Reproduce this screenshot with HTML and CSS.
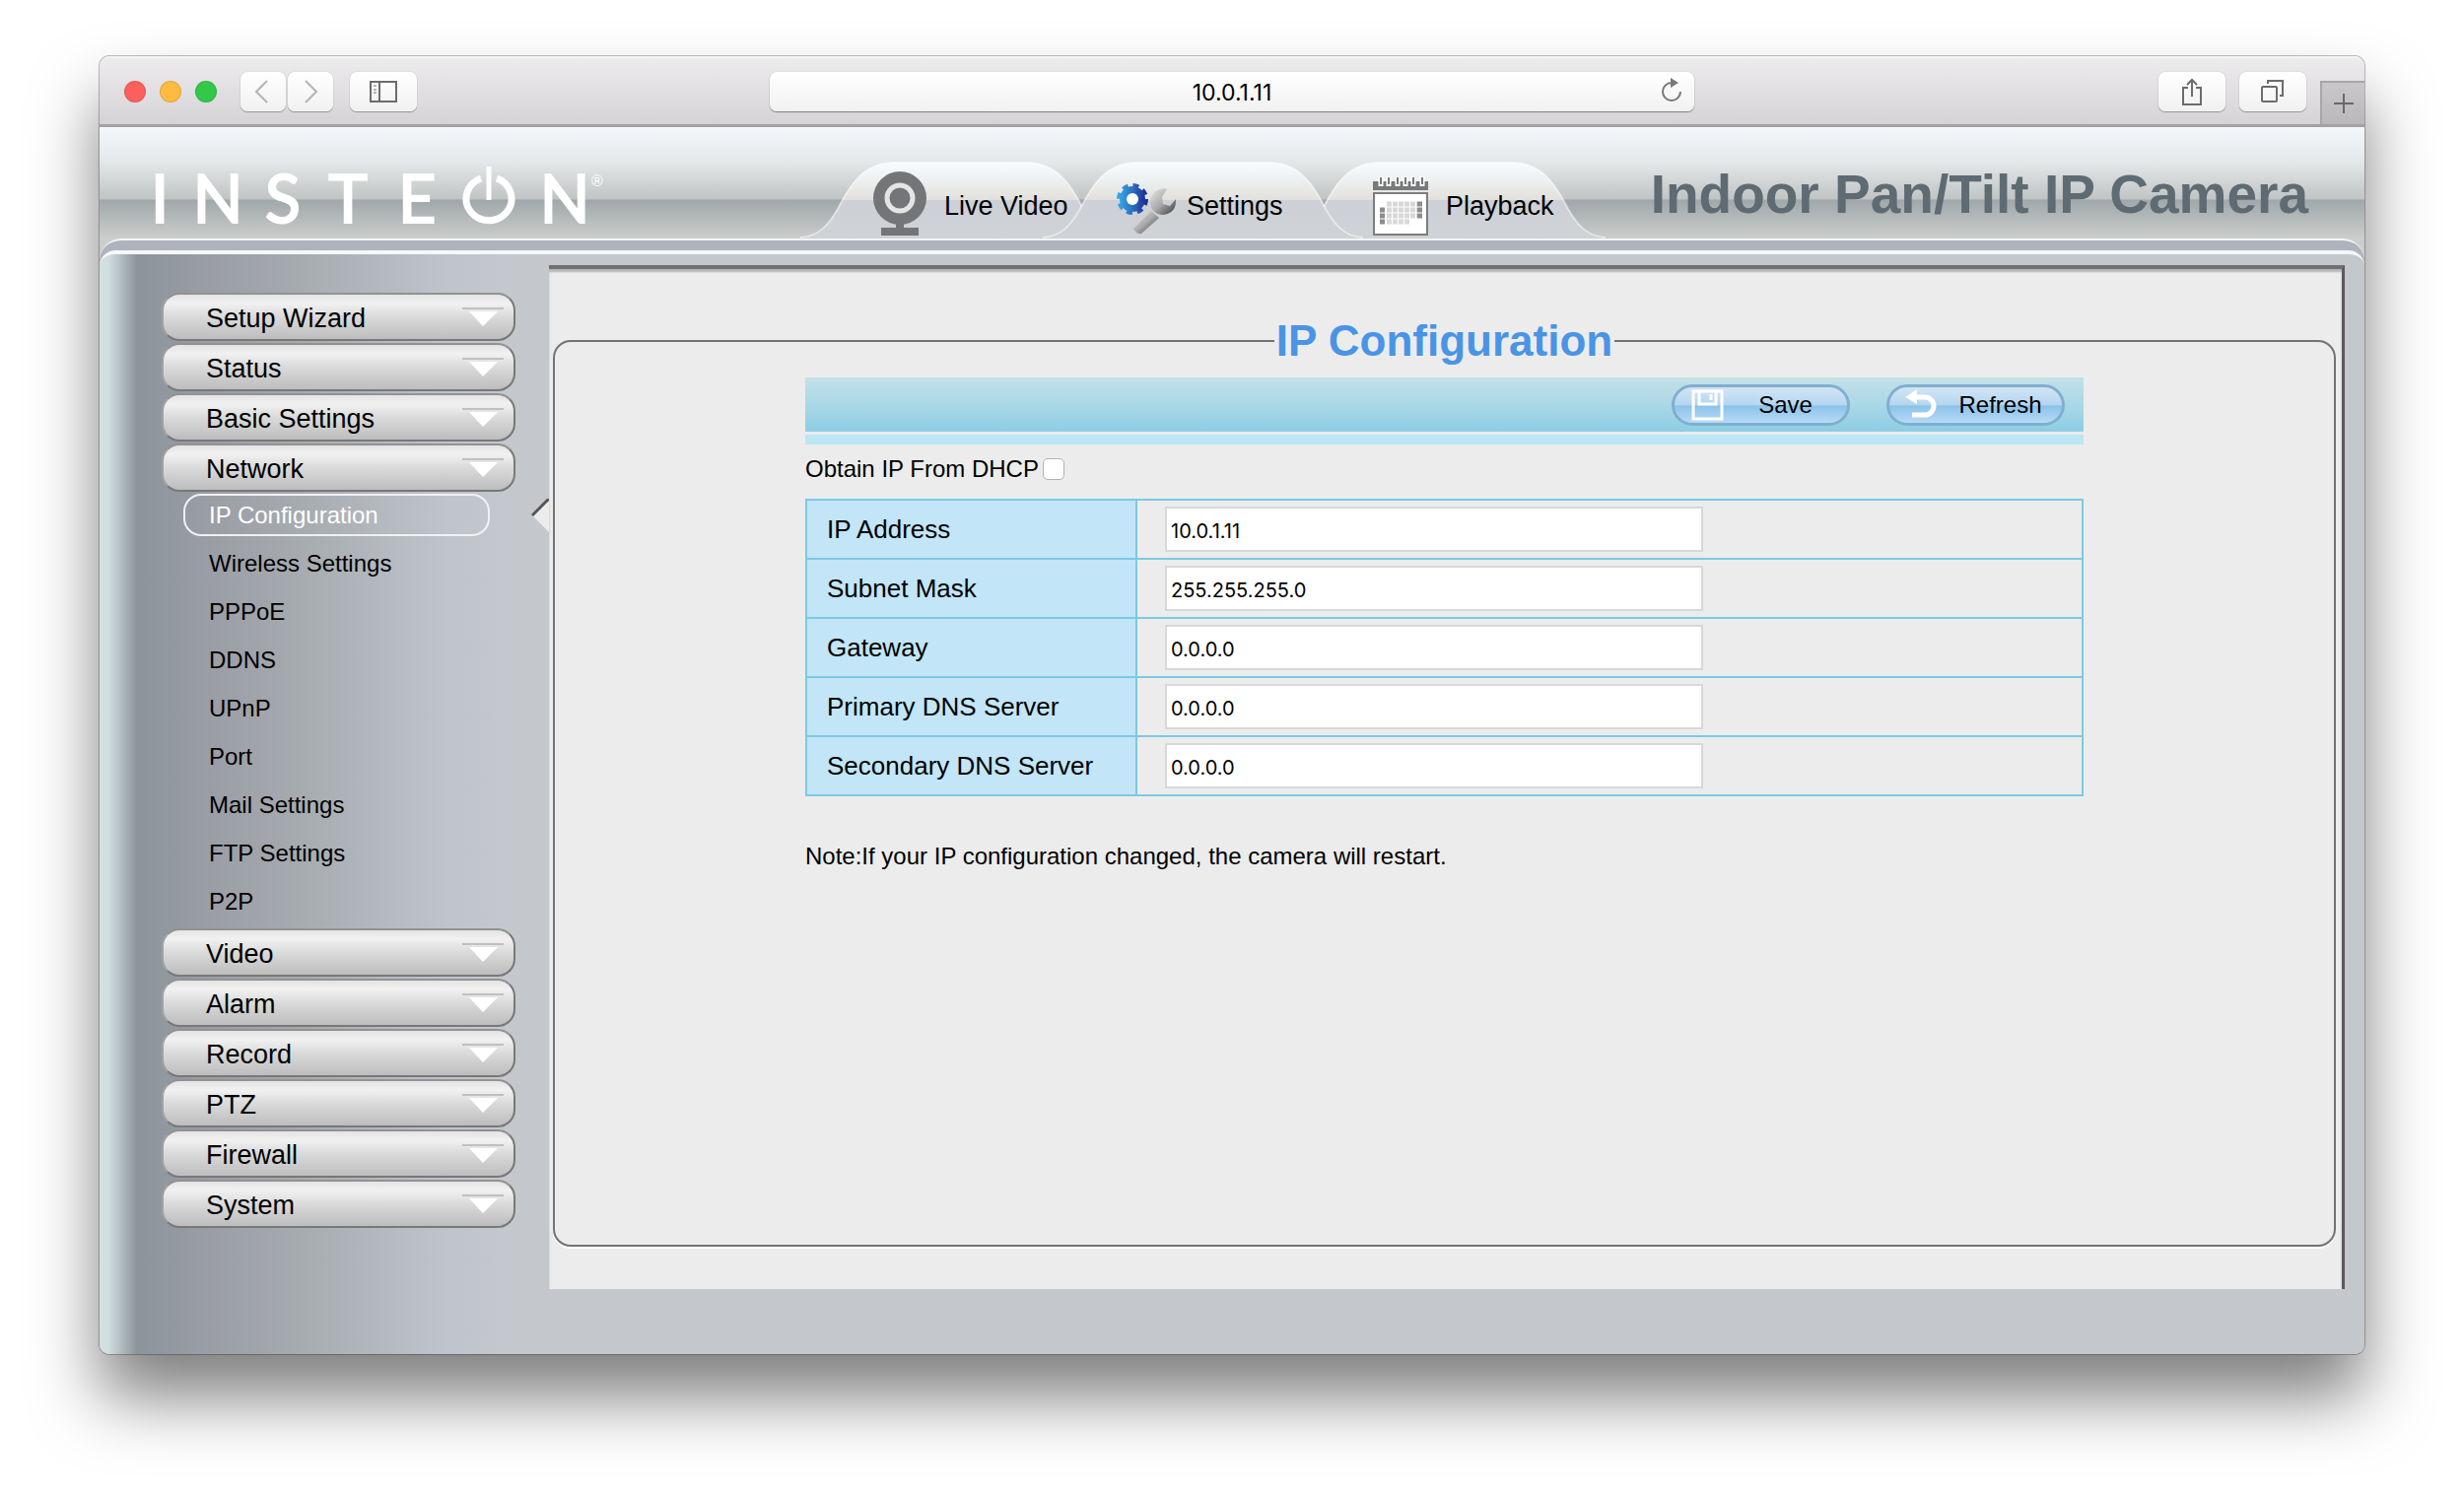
FILE: index.html
```html
<!DOCTYPE html>
<html lang="en">
<head>
  <meta charset="UTF-8">
  <meta name="viewport" content="width=device-width, initial-scale=1.0">
  <title>Indoor Pan/Tilt IP Camera</title>
  <link rel="stylesheet" href="styles.css">
</head>
<body>

<svg class="defs" aria-hidden="true">
  <defs>
    <linearGradient id="tabFill" x1="0" y1="0" x2="0" y2="1">
      <stop offset="0" stop-color="#f8fcfe"/>
      <stop offset="0.25" stop-color="#eceff0"/>
      <stop offset="0.49" stop-color="#e2e0dc"/>
      <stop offset="0.5" stop-color="#cdd0d6"/>
      <stop offset="1" stop-color="#cfd2d6"/>
    </linearGradient>
    <linearGradient id="gearFill" x1="0" y1="0" x2="1" y2="0">
      <stop offset="0" stop-color="#35a5e5"/>
      <stop offset="0.5" stop-color="#2d6fc0"/>
      <stop offset="1" stop-color="#1c2f92"/>
    </linearGradient>
    <linearGradient id="wrenchFill" x1="0" y1="0" x2="1" y2="1">
      <stop offset="0" stop-color="#e8e8e8"/>
      <stop offset="0.5" stop-color="#aaaaaa"/>
      <stop offset="1" stop-color="#3c3836"/>
    </linearGradient>
    <symbol id="tabShape" viewBox="0 0 325 78">
      <path d="M0 78C20 76 30 62 38 48C50 24 64 2 93 1H232C261 2 275 24 287 48C295 62 305 76 325 78Z" fill="url(#tabFill)"/>
      <path d="M0 77C20 76 30 62 38 48C50 24 64 2 93 1H232C261 2 275 24 287 48C295 62 305 76 325 77" fill="none" stroke="#fff" stroke-opacity="0.5" stroke-width="2"/>
    </symbol>
    <symbol id="arrowDown" viewBox="0 0 42 20">
      <path d="M0 2H42" stroke="#c0c0c0" stroke-width="2"/>
      <path d="M7 5H36L21 20Z" fill="#fff"/>
    </symbol>
  </defs>
</svg>

<div class="window">
  <div class="toolbar">
    <div class="toolbar-left">
      <span class="light light-red"></span>
      <span class="light light-yellow"></span>
      <span class="light light-green"></span>
      <div class="nav-buttons">
        <button class="tool" type="button" aria-label="Back">
          <svg width="46" height="38" viewBox="0 0 46 38"><path d="M27 8L16 19L27 30" fill="none" stroke="#b4b4b4" stroke-width="2"/></svg>
        </button>
        <button class="tool" type="button" aria-label="Forward">
          <svg width="46" height="38" viewBox="0 0 46 38"><path d="M18 8L29 19L18 30" fill="none" stroke="#b4b4b4" stroke-width="2"/></svg>
        </button>
      </div>
      <button class="tool tool-wide" type="button" aria-label="Sidebar">
        <svg width="28" height="22" viewBox="0 0 28 22" fill="none" stroke="#6c6c6c" stroke-width="2">
          <rect x="1" y="1" width="26" height="20"/>
          <path d="M10 1V21"/>
          <path d="M4 5H7M4 9H7M4 12H7" stroke-width="1"/>
        </svg>
      </button>
    </div>
    <div class="address">
      <input class="address-input" type="text" value="10.0.1.11" aria-label="Address">
      <button class="reload" type="button" aria-label="Reload">
        <svg width="24" height="26" viewBox="0 0 24 26">
          <path d="M12 5A9 9 0 1 0 21 14" fill="none" stroke="#777" stroke-width="2"/>
          <path d="M11 0L19 5L11 10Z" fill="#777"/>
        </svg>
      </button>
    </div>
    <div class="toolbar-right">
      <button class="tool tool-wide" type="button" aria-label="Share">
        <svg width="22" height="30" viewBox="0 0 22 30" fill="none" stroke="#6c6c6c" stroke-width="2">
          <path d="M7 11H2V28H20V11H15"/>
          <path d="M11 20V3M6 8L11 3L16 8"/>
        </svg>
      </button>
      <button class="tool tool-wide" type="button" aria-label="Show tabs">
        <svg width="24" height="24" viewBox="0 0 24 24" fill="none" stroke="#6c6c6c" stroke-width="2">
          <rect x="1" y="7" width="15" height="15" rx="1"/>
          <path d="M7 4V1H22V16H19"/>
        </svg>
      </button>
      <button class="new-tab" type="button" aria-label="New tab">
        <svg width="20" height="20" viewBox="0 0 20 20"><path d="M10 0V20M0 10H20" stroke="#6a686b" stroke-width="2"/></svg>
      </button>
    </div>
  </div>

  <div class="page">
    <header class="header">
      <svg class="logo" width="458" height="66" viewBox="0 0 458 66">
        <text class="logo-text" x="6 65 131 197 267" y="60">INSTE</text>
        <path d="M332 15A23 22 0 1 0 348 15" fill="none" stroke="#fff" stroke-width="7"/>
        <path d="M340 3V37" stroke="#fff" stroke-width="5"/>
        <text class="logo-text" x="417" y="60">N</text>
        <text class="logo-mark" x="450" y="23">®</text>
      </svg>
      <nav class="tabs">
        <a class="tab" href="#live">
          <svg class="tab-bg"><use href="#tabShape"/></svg>
          <svg class="tab-icon" width="62" height="66" viewBox="0 0 62 66">
            <circle cx="27" cy="25" r="27" fill="#737578"/>
            <circle cx="27" cy="25" r="13" fill="none" stroke="#e4e4e4" stroke-width="5"/>
            <path d="M23 50H31V55H46V63H8V55H23Z" fill="#737578"/>
          </svg>
          <span>Live Video</span>
        </a>
        <a class="tab tab-active" href="#settings">
          <svg class="tab-bg"><use href="#tabShape"/></svg>
          <svg class="tab-icon" width="62" height="66" viewBox="0 0 62 66">
            <circle cx="17" cy="26" r="13" fill="url(#gearFill)"/>
            <circle cx="17" cy="26" r="14" fill="none" stroke="url(#gearFill)" stroke-width="4" stroke-dasharray="6 5"/>
            <circle cx="17" cy="26" r="6" fill="#fff"/>
            <path d="M36 38L44 45L26 61Q21 62 18 56Z" fill="url(#wrenchFill)"/>
            <path d="M52 16C43 14 35 20 35 29C35 37 41 42 48 42C56 41 62 36 61 26L55 33L48 31L47 24Z" fill="url(#wrenchFill)"/>
          </svg>
          <span>Settings</span>
        </a>
        <a class="tab tab-last" href="#playback">
          <svg class="tab-bg"><use href="#tabShape"/></svg>
          <svg class="tab-icon" width="62" height="66" viewBox="0 0 62 66">
            <path d="M-2 8H54V17H-2Z" fill="#77797a"/>
            <path d="M6 3V13M14 3V13M23 3V13M31 3V13M39 3V13M48 3V13" stroke="#fff" stroke-width="5"/>
            <path d="M6 4V11M14 4V11M23 4V11M31 4V11M39 4V11M48 4V11" stroke="#777" stroke-width="2"/>
            <rect x="-1" y="20" width="54" height="42" fill="#fff" stroke="#7d7d7d" stroke-width="2"/>
            <path d="M12 31H43M12 37H43M12 43H43M12 49H36" stroke="#d8d8d8" stroke-width="5" stroke-dasharray="5 1"/>
            <path d="M5 37H10M5 43H10M5 49H10M43 31H48M43 37H48M43 43H48" stroke="#8c8c8c" stroke-width="5"/>
          </svg>
          <span>Playback</span>
        </a>
      </nav>
      <h1 class="title">Indoor Pan/Tilt IP Camera</h1>
    </header>

    <div class="frame">
      <div class="body">
        <aside class="sidebar">
          <button class="menu" type="button">Setup Wizard <svg width="42" height="20"><use href="#arrowDown"/></svg></button>
          <button class="menu" type="button">Status <svg width="42" height="20"><use href="#arrowDown"/></svg></button>
          <button class="menu" type="button">Basic Settings <svg width="42" height="20"><use href="#arrowDown"/></svg></button>
          <button class="menu" type="button">Network <svg width="42" height="20"><use href="#arrowDown"/></svg></button>
          <nav class="submenu">
            <a class="sub sub-active" href="#ip">IP Configuration
              <svg class="pointer" width="18" height="34" viewBox="0 0 18 34">
                <path d="M18 0L1 17L18 34Z" fill="#ececec"/>
                <path d="M18 0L1 17" stroke="#555" stroke-width="3"/>
              </svg>
            </a>
            <a class="sub" href="#wireless">Wireless Settings</a>
            <a class="sub" href="#pppoe">PPPoE</a>
            <a class="sub" href="#ddns">DDNS</a>
            <a class="sub" href="#upnp">UPnP</a>
            <a class="sub" href="#port">Port</a>
            <a class="sub" href="#mail">Mail Settings</a>
            <a class="sub" href="#ftp">FTP Settings</a>
            <a class="sub" href="#p2p">P2P</a>
          </nav>
          <button class="menu" type="button">Video <svg width="42" height="20"><use href="#arrowDown"/></svg></button>
          <button class="menu" type="button">Alarm <svg width="42" height="20"><use href="#arrowDown"/></svg></button>
          <button class="menu" type="button">Record <svg width="42" height="20"><use href="#arrowDown"/></svg></button>
          <button class="menu" type="button">PTZ <svg width="42" height="20"><use href="#arrowDown"/></svg></button>
          <button class="menu" type="button">Firewall <svg width="42" height="20"><use href="#arrowDown"/></svg></button>
          <button class="menu" type="button">System <svg width="42" height="20"><use href="#arrowDown"/></svg></button>
        </aside>

        <main class="panel">
          <fieldset class="box">
            <legend>IP Configuration</legend>
            <form class="form">
              <div class="actions">
                <button class="action" type="button">
                  <svg width="36" height="32" viewBox="0 0 36 32" fill="none" stroke="#fff" stroke-width="3">
                    <path d="M3 2H32V30H3Z"/>
                    <path d="M9 2V15H26V2"/>
                    <path d="M21 5V11"/>
                  </svg>
                  <span>Save</span>
                </button>
                <button class="action" type="button">
                  <svg width="36" height="32" viewBox="0 0 36 32">
                    <path d="M9 8H20A9 9 0 0 1 20 26H7" fill="none" stroke="#fff" stroke-width="5"/>
                    <path d="M0 8L12 0V15Z" fill="#fff"/>
                  </svg>
                  <span>Refresh</span>
                </button>
              </div>
              <div class="strip"></div>
              <div class="dhcp">
                <label for="dhcp">Obtain IP From DHCP</label>
                <input type="checkbox" id="dhcp" name="dhcp">
              </div>
              <table class="fields">
                <tbody>
                  <tr>
                    <th><label for="ip">IP Address</label></th>
                    <td><input type="text" id="ip" name="ip" value="10.0.1.11"></td>
                  </tr>
                  <tr>
                    <th><label for="mask">Subnet Mask</label></th>
                    <td><input type="text" id="mask" name="mask" value="255.255.255.0"></td>
                  </tr>
                  <tr>
                    <th><label for="gateway">Gateway</label></th>
                    <td><input type="text" id="gateway" name="gateway" value="0.0.0.0"></td>
                  </tr>
                  <tr>
                    <th><label for="dns1">Primary DNS Server</label></th>
                    <td><input type="text" id="dns1" name="dns1" value="0.0.0.0"></td>
                  </tr>
                  <tr>
                    <th><label for="dns2">Secondary DNS Server</label></th>
                    <td><input type="text" id="dns2" name="dns2" value="0.0.0.0"></td>
                  </tr>
                </tbody>
              </table>
              <p class="note">Note:If your IP configuration changed, the camera will restart.</p>
            </form>
          </fieldset>
        </main>
      </div>
    </div>
  </div>
</div>

</body>
</html>
```
FILE: styles.css
```css
* {
  box-sizing: border-box;
}
body {
  margin: 0;
  padding: 57px 101px 146px;
  min-height: 100vh;
  display: flex;
  background: #fff;
  color: #000;
  font-family: "Liberation Sans", Arial, sans-serif;
  font-size: 24px;
}
button, input {
  font-family: inherit;
  margin: 0;
  color: #000;
}
a {
  color: inherit;
  text-decoration: none;
}
.defs {
  position: absolute;
  width: 0;
  height: 0;
}
.window {
  flex: 1;
  display: flex;
  flex-direction: column;
  border-radius: 10px;
  overflow: hidden;
  box-shadow: 0 0 0 1px rgba(0, 0, 0, 0.25), 0 44px 68px rgba(0, 0, 0, 0.5);
}

/* browser toolbar */
.toolbar {
  display: grid;
  grid-template-columns: 1fr minmax(0, 938px) 1fr;
  height: 72px;
  background: linear-gradient(#edebee, #d5d3d6);
  border-top: 2px solid #f5f4f5;
  border-bottom: 3px solid #a3a1a4;
}
.toolbar-left, .toolbar-right {
  display: flex;
  align-items: center;
}
.toolbar-left {
  gap: 14px;
  padding-left: 25px;
}
.toolbar-right {
  justify-content: flex-end;
  gap: 14px;
}
.light {
  width: 22px;
  height: 22px;
  border-radius: 50%;
  border: 1px solid rgba(0, 0, 0, 0.1);
}
.light-red {
  background: #fc605c;
}
.light-yellow {
  background: #fdbc40;
}
.light-green {
  background: #34c84a;
}
.nav-buttons {
  display: flex;
  gap: 2px;
  margin: 0 3px 0 10px;
}
.tool {
  display: flex;
  align-items: center;
  justify-content: center;
  width: 46px;
  height: 40px;
  padding: 0;
  border: 0;
  border-radius: 7px;
  background: linear-gradient(#fff, #f1f1f1);
  box-shadow: 0 1px 1px rgba(0, 0, 0, 0.3), 0 0 1px rgba(0, 0, 0, 0.3);
}
.tool-wide {
  width: 68px;
}
.address {
  position: relative;
  align-self: center;
}
.address-input {
  display: block;
  width: 100%;
  height: 40px;
  padding: 2px 0 0;
  border: 0;
  border-radius: 7px;
  background: linear-gradient(#fff, #f1f1f1);
  box-shadow: 0 1px 1px rgba(0, 0, 0, 0.4), 0 0 1px rgba(0, 0, 0, 0.3);
  font-family: Inter, sans-serif;
  font-size: 23px;
  text-align: center;
}
.reload {
  position: absolute;
  right: 11px;
  top: 6px;
  padding: 0;
  border: 0;
  background: none;
  line-height: 0;
}
.new-tab {
  display: flex;
  align-items: center;
  justify-content: center;
  align-self: flex-end;
  width: 45px;
  height: 44px;
  padding: 0;
  border: 0;
  border-top: 2px solid #a8a6a9;
  border-left: 2px solid #a8a6a9;
  background: linear-gradient(#c9c7ca, #bab8bb);
}

/* header */
.page {
  flex: 1;
  display: flex;
  flex-direction: column;
  background: #cbcdcc;
}
.header {
  display: flex;
  align-items: flex-end;
  height: 113px;
  padding: 0 57px 0 55px;
  background: linear-gradient(#f3f7fb 0, #e4e8ea 35px, #c0c4c3 73px, #a0a8ab 74px, #cbcdcc 113px);
}
.logo {
  margin-bottom: 10px;
  overflow: visible;
}
.logo-text {
  font-family: Lato, sans-serif;
  font-size: 67px;
  fill: #fff;
  stroke: #fff;
  stroke-width: 2px;
  text-anchor: middle;
}
.logo-mark {
  font-size: 16px;
  fill: #fff;
  text-anchor: middle;
}
.tabs {
  display: flex;
  margin-left: 198px;
}
.tab {
  position: relative;
  display: flex;
  align-items: center;
  gap: 10px;
  width: 325px;
  height: 78px;
  margin-right: -79px;
  padding: 12px 0 0 74px;
  font-size: 27px;
  white-space: nowrap;
}
.tab-active {
  z-index: 1;
}
.tab-last {
  padding-left: 91px;
  margin-right: 0;
}
.tab-bg {
  position: absolute;
  left: 0;
  top: 0;
  width: 100%;
  height: 100%;
}
.tab-icon, .tab span {
  position: relative;
  overflow: visible;
}
.title {
  margin: 0 0 18px auto;
  font-size: 55px;
  line-height: 54px;
  color: #5f6b73;
  white-space: nowrap;
}

/* page body */
.frame {
  flex: 1;
  display: flex;
  padding-top: 10px;
  border-top: 2px solid #f3f4f5;
  border-radius: 22px 22px 0 0;
  background: #afb3bd;
}
.body {
  flex: 1;
  display: flex;
  border-top: 4px solid #f4f8fa;
  border-radius: 16px 16px 0 0;
  background: linear-gradient(to right, #d3e1e1 0, #d0dddd 9px, #8b949b 38px, #9a9da5 110px, #a8adb1 215px, #bfc3cc 350px, #c4c7cc 410px);
}
.sidebar {
  width: 456px;
  padding: 39px 34px 0 63px;
}
.menu {
  display: flex;
  align-items: center;
  justify-content: space-between;
  width: 100%;
  height: 49px;
  margin-bottom: 2px;
  padding: 3px 10px 0 43px;
  border: 2px solid #77787b;
  border-top-color: #929292;
  border-left-color: #a2a2a2;
  border-radius: 18px;
  background: linear-gradient(#e4e4e4, #f1f1f1 20%, #dadada 50%, #bdbdbd);
  font-size: 27px;
}
.menu svg {
  margin-bottom: 4px;
}
.submenu {
  padding: 0 26px 0 22px;
}
.sub {
  position: relative;
  display: flex;
  align-items: center;
  height: 43px;
  margin-bottom: 6px;
  padding-left: 24px;
  border: 2px solid transparent;
  border-radius: 18px;
  font-size: 24px;
}
.sub-active {
  border-color: #f0f1f3;
  color: #fff;
}
.pointer {
  position: absolute;
  left: 100%;
  top: 3px;
  margin-left: 44px;
}
.panel {
  flex: 1;
  display: flex;
  margin: 11px 20px 66px 0;
  padding: 48px 6px 43px 4px;
  border-top: 4px solid #6f7172;
  border-right: 3px solid #5d5a5d;
  background: #ececec;
  box-shadow: inset 0 3px 2px #b5b5b5;
}
.box {
  flex: 1;
  margin: 0;
  padding: 12px 0 0;
  border: 2px solid #737373;
  border-radius: 18px;
  box-shadow: 0 2px 1px #fff;
}
.box legend {
  margin: 0 auto;
  padding: 0 2px;
  color: #4a94e6;
  font-size: 44px;
  font-weight: bold;
  line-height: 50px;
}
.form {
  width: 72%;
  max-width: 1297px;
  margin: 0 auto;
}
.actions {
  display: flex;
  justify-content: flex-end;
  align-items: center;
  gap: 37px;
  height: 55px;
  padding-right: 19px;
  background: linear-gradient(#c4e0e7, #aad8e7 50%, #8ccde4);
}
.action {
  display: flex;
  align-items: center;
  width: 181px;
  height: 42px;
  padding: 0 10px 0 16px;
  border: 3px solid #82aed0;
  border-radius: 21px;
  background: linear-gradient(#d2e4f5, #b5d6f0 50%, #8cc2ea 52%, #b5dbf5);
  font-size: 24px;
}
.action span {
  flex: 1;
  padding-left: 8px;
}
.strip {
  height: 10px;
  margin-top: 3px;
  background: #bde5f3;
}
.dhcp {
  display: flex;
  align-items: center;
  gap: 4px;
  height: 50px;
}
.dhcp input {
  appearance: none;
  width: 22px;
  height: 22px;
  border: 1px solid #b2b2b2;
  border-radius: 5px;
  background: #fff;
}
.fields {
  width: 100%;
  margin-top: 5px;
  border-collapse: collapse;
}
.fields th, .fields td {
  height: 60px;
  padding: 0;
  border: 2px solid #7bcae4;
  text-align: left;
}
.fields th {
  width: 335px;
  padding-left: 20px;
  background: #c2e5f7;
  font-size: 26px;
  font-weight: normal;
}
.fields td {
  padding-left: 28px;
}
.fields input {
  display: block;
  width: 100%;
  max-width: 546px;
  height: 46px;
  padding: 3px 4px 0;
  border: 2px solid #d8d8d8;
  background: #fff;
  font-family: Inter, sans-serif;
  font-size: 20px;
}
.note {
  margin: 46px 0 0;
  line-height: 30px;
}
```
